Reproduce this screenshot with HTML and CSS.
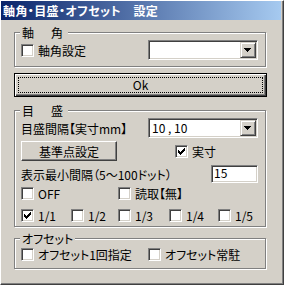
FILE: index.html
```html
<!DOCTYPE html>
<html lang="ja">
<head>
  <meta charset="UTF-8" />
  <title>軸角・目盛・オフセット 設定</title>
  <link rel="stylesheet" href="styles.css">
</head>
<body>

  <div class="window">
    <div class="titlebar">軸角・目盛・オフセット　設定</div>

    <div class="panel">
      <!-- 軸角 -->
      <div class="group g-axis">
        <div class="legend spaced">軸　角</div>
        <div class="row">
          <span class="check"><span class="box"></span>軸角設定</span>
          <div class="combo">
            <span class="combo-text"></span>
            <span class="drop"><svg width="7" height="4" shape-rendering="crispEdges"><path d="M0 0h7v1h-1v1h-1v1h-1v1h-1v-1h-1v-1h-1v-1h-1z"/></svg></span>
          </div>
        </div>
      </div>

      <button class="btn btn-ok"><span class="focus">Ok</span></button>

      <!-- 目盛 -->
      <div class="group g-scale">
        <div class="legend spaced">目　盛</div>
        <div class="row r-interval">
          <span>目盛間隔【実寸mm】</span>
          <div class="combo">
            <span class="combo-text">10 , 10</span>
            <span class="drop"><svg width="7" height="4" shape-rendering="crispEdges"><path d="M0 0h7v1h-1v1h-1v1h-1v1h-1v-1h-1v-1h-1v-1h-1z"/></svg></span>
          </div>
        </div>
        <div class="row r-base">
          <button class="btn btn-base">基準点設定</button>
          <span class="check real"><span class="box"><svg width="11" height="11" shape-rendering="crispEdges"><path d="M2 4h1v3h-1zM3 5h1v3h-1zM4 6h1v3h-1zM5 5h1v3h-1zM6 4h1v3h-1zM7 3h1v3h-1zM8 2h1v3h-1z"/></svg></span>実寸</span>
        </div>
        <div class="row r-min">
          <span>表示最小間隔（5～100ドット）</span>
          <span class="field">15</span>
        </div>
        <div class="opts r-off">
          <span class="check"><span class="box"></span>OFF</span>
          <span></span>
          <span class="check"><span class="box"></span>読取【無】</span>
        </div>
        <div class="opts r-ratio">
          <span class="check"><span class="box"><svg width="11" height="11" shape-rendering="crispEdges"><path d="M2 4h1v3h-1zM3 5h1v3h-1zM4 6h1v3h-1zM5 5h1v3h-1zM6 4h1v3h-1zM7 3h1v3h-1zM8 2h1v3h-1z"/></svg></span>1/1</span>
          <span class="check"><span class="box"></span>1/2</span>
          <span class="check"><span class="box"></span>1/3</span>
          <span class="check"><span class="box"></span>1/4</span>
          <span class="check"><span class="box"></span>1/5</span>
        </div>
      </div>

      <!-- オフセット -->
      <div class="group g-offset">
        <div class="legend">オフセット</div>
        <div class="offset-row">
          <span class="check"><span class="box"></span>オフセット1回指定</span>
          <span class="check"><span class="box"></span>オフセット常駐</span>
        </div>
      </div>
    </div>
  </div>

</body>
</html>
```

FILE: styles.css
```css
:root {
  --face: #d4d0c8;
  --shadow: #808080;
  --dark: #404040;
  --light: #ffffff;
}

* {
  box-sizing: border-box;
  margin: 0;
  padding: 0;
}

body {
  background: var(--face);
  color: #000;
  font-family: "Noto Sans CJK JP", sans-serif;
  font-size: 12px;
  font-feature-settings: "palt";
}

/* Window frame */
.window {
  width: 284px;
  height: 285px;
  border: 1px solid;
  border-color: var(--light) var(--dark) var(--dark) var(--light);
  box-shadow: inset -1px -1px var(--shadow);
  padding-right: 2px;
  background: var(--face);
}

.titlebar {
  height: 19px;
  line-height: 19px;
  padding-left: 2px;
  color: #fff;
  font-weight: bold;
  letter-spacing: 0.4px;
  white-space: nowrap;
  background: linear-gradient(to right, #0a246a, #a6caf0);
}

.panel {
  padding: 0 15px 0 13px;
}

/* Group boxes */
.group {
  border: 1px solid var(--shadow);
  box-shadow: inset 1px 1px var(--light), 1px 1px var(--light);
  padding: 0 7px 0 6px;
}

.legend {
  display: table;
  margin: -7px 0 0 -1px;
  padding: 0 2px;
  line-height: 13px;
  background: var(--face);
}

.legend.spaced {
  letter-spacing: 2.5px;
}

.g-axis {
  margin-top: 12px;
  padding-bottom: 6px;
}

.g-scale {
  margin-top: 13px;
  padding-bottom: 4px;
}

.g-offset {
  margin-top: 11px;
  padding-bottom: 7px;
}

.row {
  display: flex;
  align-items: center;
  justify-content: space-between;
  white-space: nowrap;
}

.g-axis .row {
  margin-top: 1px;
  height: 20px;
}

.r-interval {
  margin-top: 1px;
  height: 20px;
}

.r-base {
  margin-top: 3px;
  height: 20px;
  justify-content: flex-start;
}

.r-min {
  margin-top: 4px;
  height: 18px;
}

.opts {
  display: grid;
  grid-template-columns: 50px 47px 51px 49px auto;
  height: 13px;
}

.r-off {
  margin-top: 4px;
}

.r-ratio {
  margin-top: 9px;
}

.offset-row {
  display: grid;
  grid-template-columns: 127px auto;
  margin-top: 3px;
  height: 13px;
}

/* Checkbox */
.check {
  display: flex;
  align-items: center;
  gap: 4px;
  line-height: 13px;
  white-space: nowrap;
}

.box {
  flex: none;
  width: 13px;
  height: 13px;
  background: #fff;
  border: 1px solid;
  border-color: var(--shadow) var(--light) var(--light) var(--shadow);
  box-shadow: inset 1px 1px var(--dark), inset -1px -1px var(--face);
}

.box svg {
  display: block;
}

.real {
  margin-left: 58px;
}

/* Combo box and edit field */
.combo {
  display: flex;
  width: 110px;
  height: 20px;
  padding: 1px;
  background: #fff;
  border: 1px solid;
  border-color: var(--shadow) var(--light) var(--light) var(--shadow);
  box-shadow: inset 1px 1px var(--dark), inset -1px -1px var(--face);
}

.combo-text {
  flex: 1;
  padding-left: 2px;
  line-height: 16px;
}

.drop {
  width: 16px;
  height: 16px;
  background: var(--face);
  border: 1px solid;
  border-color: var(--face) var(--dark) var(--dark) var(--face);
  box-shadow: inset 1px 1px var(--light), inset -1px -1px var(--shadow);
}

.drop svg {
  display: block;
  margin: 5px 0 0 3px;
}

.field {
  width: 47px;
  height: 18px;
  padding-left: 2px;
  line-height: 14px;
  background: #fff;
  border: 1px solid;
  border-color: var(--shadow) var(--light) var(--light) var(--shadow);
  box-shadow: inset 1px 1px var(--dark), inset -1px -1px var(--face);
}

/* Push buttons */
.btn {
  display: flex;
  align-items: center;
  justify-content: center;
  font: inherit;
  color: inherit;
  background: var(--face);
  border: 1px solid;
  border-color: var(--light) var(--dark) var(--dark) var(--light);
  box-shadow: inset -1px -1px var(--shadow);
}

.btn-ok {
  width: 253px;
  height: 24px;
  margin-top: 6px;
  border-color: #000;
  box-shadow: inset 1px 1px var(--light), inset -1px -1px var(--dark), inset -2px -2px var(--shadow);
}

.btn-ok .focus {
  flex: 1;
  align-self: stretch;
  margin: 3px;
  border: 1px dotted #000;
  line-height: 14px;
  text-align: center;
}

.btn-base {
  width: 96px;
  height: 20px;
}
```
